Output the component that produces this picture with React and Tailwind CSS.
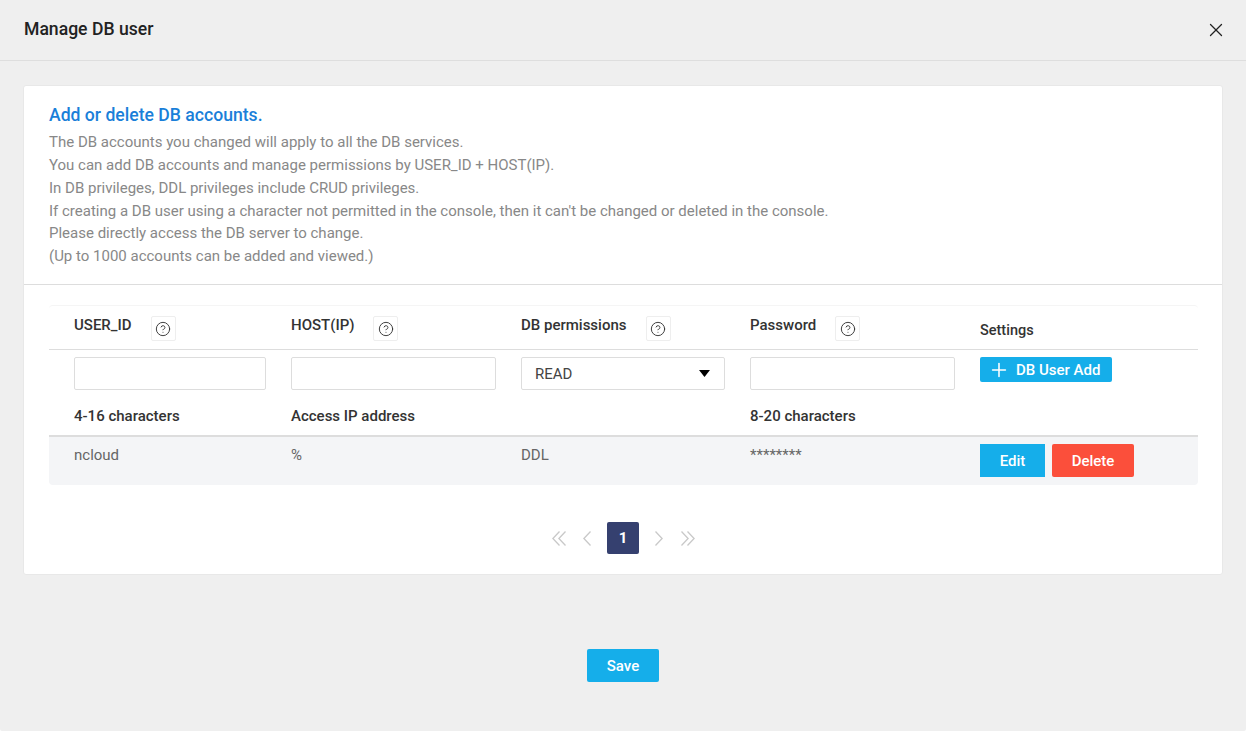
import { Plus, X, CircleHelp } from 'lucide-react';

const notes = [
  'The DB accounts you changed will apply to all the DB services.',
  'You can add DB accounts and manage permissions by USER_ID + HOST(IP).',
  'In DB privileges, DDL privileges include CRUD privileges.',
  "If creating a DB user using a character not permitted in the console, then it can't be changed or deleted in the console.",
  'Please directly access the DB server to change.',
  '(Up to 1000 accounts can be added and viewed.)',
];

const gridCols = 'grid grid-cols-[217px_230px_229px_230px_1fr]';

function PageArrow({ d, width }) {
  return (
    <svg width={width} height="15" viewBox={`0 0 ${width} 15`} fill="none" stroke="#c9c9c9" strokeWidth="1.3">
      <path d={d} />
    </svg>
  );
}

function HeadCell({ label }) {
  return (
    <div className="flex items-start pl-[25px] pt-[10px]">
      <span className="mt-px text-[15px] font-medium leading-[16px] text-[#333333]">{label}</span>
      <span className="ml-[19px] flex h-[25px] w-[25px] items-center justify-center rounded-[2px] border border-[#eeeeee] bg-white pt-px">
        <CircleHelp size={16} strokeWidth={1.4} className="text-[#333333]" />
      </span>
    </div>
  );
}

function TextBox({ className }) {
  return <input className={`h-[33px] rounded-[2px] border border-[#dddddd] bg-white outline-none ${className}`} />;
}

function Hint({ children }) {
  return <p className="mt-[17px] text-[15px] font-medium leading-[18px] text-[#333333]">{children}</p>;
}

export default function App() {
  return (
    <div className="h-[731px] w-[1246px] overflow-hidden rounded-b-[2px] bg-[#efefef] font-['Roboto',sans-serif]">
      <div className="flex h-[61px] items-center justify-between border-b border-[#dedede] pl-6 pr-[19px]">
        <h1 className="-mt-[2px] text-[17.6px] font-medium leading-[20px] text-[#222222]">Manage DB user</h1>
        <X size={22} strokeWidth={1.4} className="text-[#222222]" />
      </div>

      <div className="ml-[23px] mt-[24px] h-[490px] w-[1200px] rounded-[3px] border border-[#e8e8e8] bg-white">
        <div className="h-[199px] border-b border-[#dddddd] pl-[25px] pt-[18px]">
          <h2 className="text-[17.6px] font-medium leading-[22px] text-[#1a7fd9]">Add or delete DB accounts.</h2>
          <div className="mt-[5.2px] text-[15px] leading-[22.8px] text-[#888888]">
            {notes.map((line) => (
              <p key={line}>{line}</p>
            ))}
          </div>
        </div>

        <div className="ml-[25px] mt-[20px] w-[1149px] rounded-[4px] border-t border-[#f5f5f5]">
          <div className={`${gridCols} h-[44px] border-b border-[#dddddd]`}>
            <HeadCell label="USER_ID" />
            <HeadCell label="HOST(IP)" />
            <HeadCell label="DB permissions" />
            <HeadCell label="Password" />
            <div className="pl-[25px] pt-[17px] text-[14.5px] font-medium leading-[16px] text-[#333333]">Settings</div>
          </div>

          <div className={`${gridCols} h-[87px] border-b-2 border-[#dddddd]`}>
            <div className="pl-[25px] pt-[7px]">
              <TextBox className="w-[192px]" />
              <Hint>4-16 characters</Hint>
            </div>
            <div className="pl-[25px] pt-[7px]">
              <TextBox className="w-[205px]" />
              <Hint>Access IP address</Hint>
            </div>
            <div className="pl-[25px] pt-[7px]">
              <div className="flex h-[33px] w-[204px] items-center justify-between rounded-[2px] border border-[#dddddd] bg-white pl-[13px] pr-[14px] text-[15px] text-[#444444]">
                <span className="pt-px">READ</span>
                <svg width="11" height="7" viewBox="0 0 11 7"><path d="M0 0h11L5.5 7z" fill="#000" /></svg>
              </div>
            </div>
            <div className="pl-[25px] pt-[7px]">
              <TextBox className="w-[205px]" />
              <Hint>8-20 characters</Hint>
            </div>
            <div className="pl-[25px] pt-[7px]">
              <button className="flex h-[25px] w-[132px] items-center rounded-[2px] bg-[#15aeea] pl-[8px] text-[15px] font-medium text-white">
                <Plus size={22} strokeWidth={1.7} />
                <span className="ml-[6px] pt-px">DB User Add</span>
              </button>
            </div>
          </div>

          <div className={`${gridCols} h-[48px] rounded-b-[4px] bg-[#f4f5f7] text-[15px] leading-[18px] text-[#666666]`}>
            <div className="pl-[25px] pt-[9px]">ncloud</div>
            <div className="pl-[25px] pt-[9px]">%</div>
            <div className="pl-[25px] pt-[9px]">DDL</div>
            <div className="pl-[25px] pt-[9px]">********</div>
            <div className="flex items-start gap-[7px] pl-[25px] pt-[7px] font-medium text-white">
              <button className="h-[33px] w-[65px] bg-[#15aeea]">Edit</button>
              <button className="h-[33px] w-[82px] rounded-[2px] bg-[#fb4f3b]">Delete</button>
            </div>
          </div>
        </div>

        <div className="ml-[528px] mt-[37px] flex items-center">
          <PageArrow width={14} d="M7.5 .5 .9 7.5l6.6 7M13.5 .5 6.9 7.5l6.6 7" />
          <span className="ml-[17px]"><PageArrow width={8} d="M7.5 .5 .9 7.5l6.6 7" /></span>
          <span className="ml-[16px] flex h-8 w-8 items-center justify-center rounded-[2px] bg-[#35406f] text-[15px] font-bold text-white">1</span>
          <span className="ml-[16px]"><PageArrow width={8} d="M.5 .5l6.6 7-6.6 7" /></span>
          <span className="ml-[18px]"><PageArrow width={14} d="M.5 .5l6.6 7-6.6 7M6.5 .5l6.6 7-6.6 7" /></span>
        </div>
      </div>

      <div className="mt-[74px] flex justify-center">
        <button className="h-[33px] w-[72px] rounded-[2px] bg-[#15aeea] pt-px text-[15px] font-medium text-white">Save</button>
      </div>
    </div>
  );
}
